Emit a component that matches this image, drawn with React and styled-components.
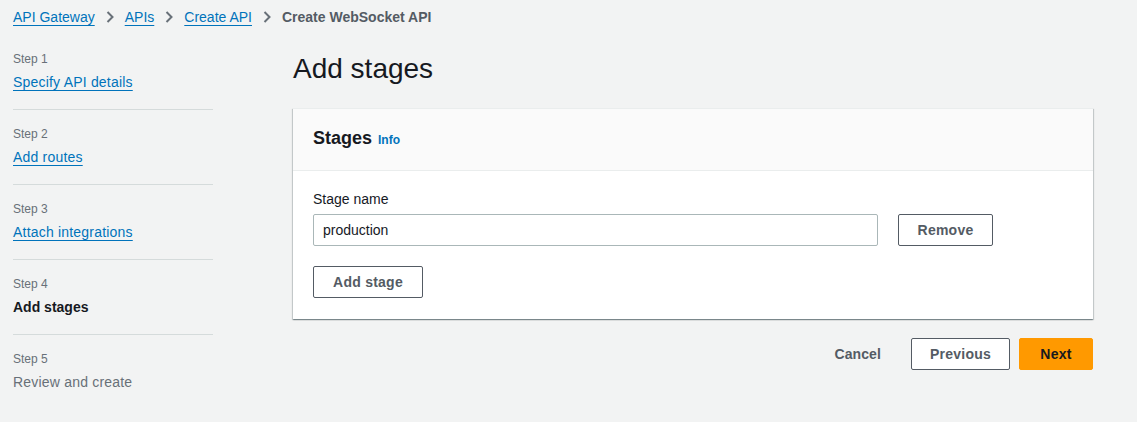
import React from 'react';
import styled, { createGlobalStyle } from 'styled-components';

const GlobalStyle = createGlobalStyle`
  body {
    margin: 0;
    background: #f2f3f3;
    font-family: "Liberation Sans", Arial, sans-serif;
    color: #16191f;
  }
`;

const Page = styled.div`
  width: 1137px;
  height: 422px;
  background: #f2f3f3;
  overflow: hidden;
`;

const Breadcrumbs = styled.nav`
  display: flex;
  align-items: center;
  gap: 10px;
  height: 33px;
  padding-left: 13px;
  font-size: 14px;
`;

const Crumb = styled.a`
  color: #0073bb;
  text-decoration: underline;
  text-underline-offset: 3px;
  cursor: pointer;
`;

const CurrentCrumb = styled.span`
  color: #545b64;
  font-weight: bold;
`;

const Chevron = () => (
  <svg width="10" height="12" viewBox="0 0 10 12">
    <path d="M2.5 1 L7.5 6 L2.5 11" fill="none" stroke="#687078" strokeWidth="2" />
  </svg>
);

const Layout = styled.div`
  display: flex;
  padding-left: 13px;
`;

const SideNav = styled.ul`
  list-style: none;
  margin: 0;
  padding: 18px 0 0;
  width: 200px;
`;

const StepItem = styled.li`
  padding: 0 0 17px;
  margin-bottom: 16px;
  border-bottom: ${({ $last }) => ($last ? 'none' : '1px solid #d5dbdb')};
`;

const StepLabel = styled.div`
  font-size: 12px;
  color: #687078;
  line-height: 16px;
  margin-bottom: 5px;
`;

const StepLink = styled.a`
  font-size: 14px;
  line-height: 20px;
  color: #0073bb;
  text-decoration: underline;
  text-underline-offset: 3px;
  letter-spacing: 0.2px;
`;

const StepCurrent = styled.span`
  font-size: 14px;
  line-height: 20px;
  font-weight: bold;
  color: #16191f;
`;

const StepDisabled = styled.span`
  font-size: 14px;
  line-height: 20px;
  color: #687078;
  letter-spacing: 0.2px;
`;

const Main = styled.main`
  margin-left: 80px;
  width: 800px;
`;

const Heading = styled.h1`
  margin: 18px 0 0;
  font-size: 28px;
  font-weight: normal;
  line-height: 36px;
  color: #16191f;
  height: 57px;
`;

const Container = styled.section`
  background: #fff;
  box-shadow: 0 1px 1px 0 rgba(0, 28, 36, 0.3), 1px 1px 1px 0 rgba(0, 28, 36, 0.15),
    -1px 1px 1px 0 rgba(0, 28, 36, 0.15);
  border-top: 1px solid #eaeded;
`;

const ContainerHeader = styled.header`
  display: flex;
  align-items: baseline;
  gap: 6px;
  height: 62px;
  box-sizing: border-box;
  padding: 18px 20px 0;
  background: #fafafa;
  border-bottom: 1px solid #eaeded;
`;

const HeaderTitle = styled.h2`
  margin: 0;
  font-size: 18px;
  font-weight: bold;
  line-height: 22px;
`;

const InfoLink = styled.a`
  font-size: 12px;
  font-weight: bold;
  color: #0073bb;
`;

const ContainerBody = styled.div`
  padding: 19px 20px 21px;
`;

const FieldLabel = styled.label`
  display: block;
  font-size: 14px;
  line-height: 18px;
  color: #16191f;
  margin-bottom: 6px;
`;

const FieldRow = styled.div`
  display: flex;
  gap: 20px;
  margin-bottom: 20px;
`;

const TextInput = styled.input`
  width: 565px;
  height: 32px;
  box-sizing: border-box;
  border: 1px solid #aab7b8;
  border-radius: 2px;
  padding: 0 9px;
  font-family: inherit;
  font-size: 14px;
  color: #16191f;
  outline: none;
`;

const Button = styled.button`
  height: 32px;
  box-sizing: border-box;
  width: ${({ $w }) => $w || 'auto'};
  padding: 0;
  border: 1px solid ${({ $primary }) => ($primary ? '#ff9900' : '#545b64')};
  border-radius: 2px;
  background: ${({ $primary }) => ($primary ? '#ff9900' : '#fff')};
  color: ${({ $primary }) => ($primary ? '#16191f' : '#545b64')};
  font-family: inherit;
  font-size: 14px;
  font-weight: bold;
  letter-spacing: 0.25px;
  cursor: pointer;
`;

const LinkButton = styled.button`
  height: 32px;
  padding: 0 21px 0 0;
  border: none;
  background: none;
  color: #545b64;
  font-family: inherit;
  font-size: 14px;
  font-weight: bold;
  letter-spacing: 0.1px;
`;

const Actions = styled.div`
  display: flex;
  justify-content: flex-end;
  align-items: center;
  gap: 9px;
  margin-top: 19px;
`;

const steps = [
  { label: 'Step 1', title: 'Specify API details', state: 'link' },
  { label: 'Step 2', title: 'Add routes', state: 'link' },
  { label: 'Step 3', title: 'Attach integrations', state: 'link' },
  { label: 'Step 4', title: 'Add stages', state: 'current' },
  { label: 'Step 5', title: 'Review and create', state: 'disabled' },
];

export default function App() {
  return (
    <Page>
      <GlobalStyle />
      <Breadcrumbs>
        <Crumb>API Gateway</Crumb>
        <Chevron />
        <Crumb>APIs</Crumb>
        <Chevron />
        <Crumb>Create API</Crumb>
        <Chevron />
        <CurrentCrumb>Create WebSocket API</CurrentCrumb>
      </Breadcrumbs>
      <Layout>
        <SideNav>
          {steps.map((s, i) => (
            <StepItem key={s.label} $last={i === steps.length - 1}>
              <StepLabel>{s.label}</StepLabel>
              {s.state === 'link' && <StepLink>{s.title}</StepLink>}
              {s.state === 'current' && <StepCurrent>{s.title}</StepCurrent>}
              {s.state === 'disabled' && <StepDisabled>{s.title}</StepDisabled>}
            </StepItem>
          ))}
        </SideNav>
        <Main>
          <Heading>Add stages</Heading>
          <Container>
            <ContainerHeader>
              <HeaderTitle>Stages</HeaderTitle>
              <InfoLink>Info</InfoLink>
            </ContainerHeader>
            <ContainerBody>
              <FieldLabel>Stage name</FieldLabel>
              <FieldRow>
                <TextInput defaultValue="production" />
                <Button $w="95px">Remove</Button>
              </FieldRow>
              <Button $w="110px">Add stage</Button>
            </ContainerBody>
          </Container>
          <Actions>
            <LinkButton>Cancel</LinkButton>
            <Button $w="99px">Previous</Button>
            <Button $primary $w="74px">Next</Button>
          </Actions>
        </Main>
      </Layout>
    </Page>
  );
}
